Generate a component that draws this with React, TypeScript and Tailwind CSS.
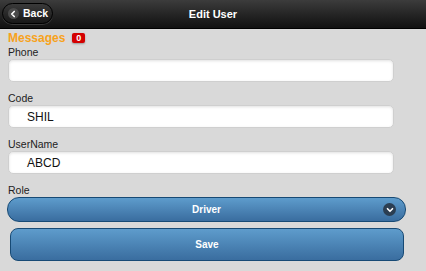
import { ChevronLeft, ChevronDown } from 'lucide-react';

const font = { fontFamily: '"Liberation Sans", Arial, sans-serif' };

function Field({ label, value, first }: { label: string; value?: string; first?: boolean }) {
  return (
    <div className={first ? '' : 'mt-[9px]'}>
      <div className="text-[10.5px] leading-[14px] text-[#222]">{label}</div>
      <div className="h-[23px] w-[386px] rounded-[5px] border border-[#cfcfcf] bg-white shadow-[inset_0_1px_3px_rgba(0,0,0,0.12)] pl-[18px] flex items-center text-[12px] text-[#111]">
        {value}
      </div>
    </div>
  );
}

export default function App() {
  return (
    <div className="w-[426px] h-[271px] bg-[#d9d9d9] overflow-hidden" style={font}>
      <header className="relative h-[29px] bg-gradient-to-b from-[#3c3c3c] to-[#111] border-b border-[#000] flex items-center justify-center">
        <button className="absolute left-[2px] top-[3px] h-[21px] w-[51px] rounded-full border border-[#000] bg-gradient-to-b from-[#3a3a3a] to-[#181818] shadow-[0_1px_0_rgba(255,255,255,0.15)] flex items-center pl-[5px] gap-[4px]">
          <span className="w-[11px] h-[11px] rounded-full bg-[#4a4a4a] flex items-center justify-center">
            <ChevronLeft size={10} strokeWidth={4} className="text-white -ml-[1px]" />
          </span>
          <span className="text-[10.5px] font-bold text-white">Back</span>
        </button>
        <h1 className="text-[11px] font-bold text-white">Edit User</h1>
      </header>

      <main className="px-2 pt-[2px]">
        <div className="flex items-center h-[14px]">
          <span className="text-[12px] font-bold text-[#f7a21b]">Messages</span>
          <span className="ml-[7px] h-[10px] w-[13px] rounded-[2px] bg-[#d40000] text-white text-[9px] font-bold leading-[10px] text-center shadow-[0_1px_2px_rgba(0,0,0,0.3)]">
            0
          </span>
        </div>
        <Field label="Phone" first />
        <Field label="Code" value="SHIL" />
        <Field label="UserName" value="ABCD" />

        <div className="mt-[9px]">
          <div className="text-[10.5px] leading-[14px] text-[#222]">Role</div>
          <div className="-ml-px h-[25px] w-[399px] rounded-[12px] border border-[#174a75] bg-gradient-to-b from-[#5e9ccc] to-[#3a6d9f] flex items-center justify-center relative">
            <span className="text-[10px] font-bold text-white">Driver</span>
            <span className="absolute right-[9px] top-[5px] w-[13px] h-[13px] rounded-full bg-[#2b3e52] flex items-center justify-center">
              <ChevronDown size={10} strokeWidth={4} className="text-white mt-[1px]" />
            </span>
          </div>
        </div>

        <button className="mt-[6px] ml-[2px] h-[33px] w-[394px] rounded-[8px] border border-[#174a75] bg-gradient-to-b from-[#5e9ccc] to-[#3a6d9f] flex items-center justify-center">
          <span className="text-[10px] font-bold text-white">Save</span>
        </button>
      </main>
    </div>
  );
}
